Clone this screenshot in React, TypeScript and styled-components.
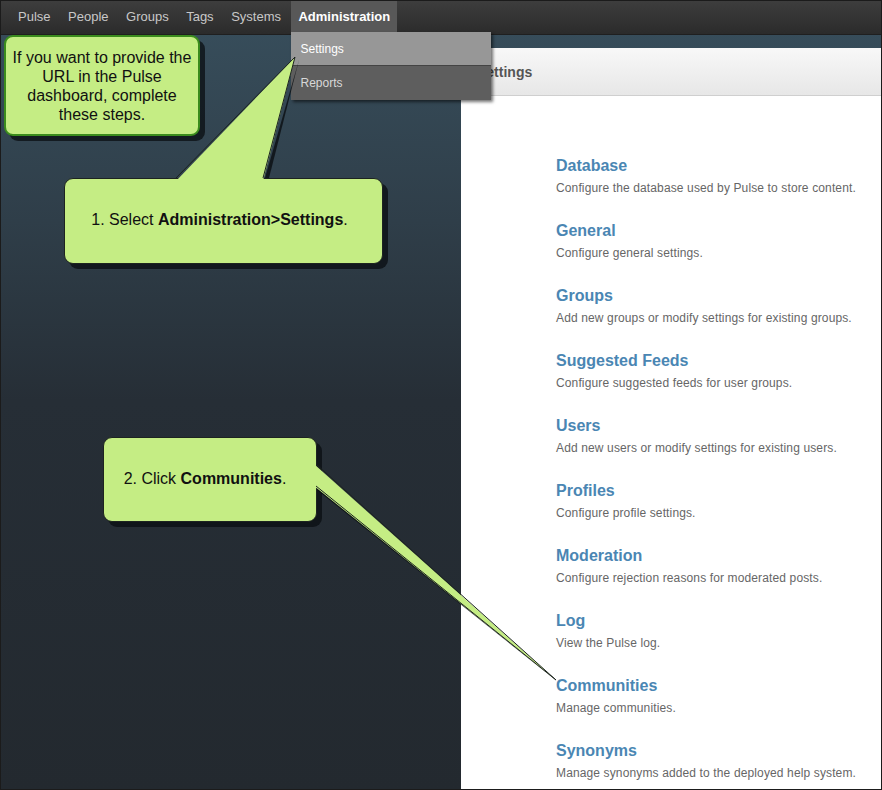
import React from "react";
import styled, { createGlobalStyle } from "styled-components";

const Global = createGlobalStyle`
  html, body { margin: 0; padding: 0; background: #fff; }
  body { font-family: "Liberation Sans", Arial, sans-serif; }
  * { box-sizing: border-box; }
`;

const Frame = styled.div`
  position: relative;
  width: 882px;
  height: 790px;
  border: 1px solid #1b1b1b;
  overflow: hidden;
  display: flex;
  flex-direction: column;
  background: linear-gradient(#384f5d 0px, #2f3e49 220px, #262e36 400px, #23292f 790px);
`;

const NavBar = styled.nav`
  height: 34px;
  flex: none;
  display: flex;
  align-items: stretch;
  padding-left: 10px;
  gap: 3.5px;
  background: linear-gradient(#3d3d3d, #2b2b2b);
  border-bottom: 1px solid #1f1f1f;
`;

const NavItem = styled.div<{ $active?: boolean }>`
  position: relative;
  display: flex;
  align-items: center;
  height: 31px;
  padding: 0 7px;
  font-size: 13px;
  color: ${(p) => (p.$active ? "#ffffff" : "#c8c8c8")};
  font-weight: ${(p) => (p.$active ? "bold" : "normal")};
  background: ${(p) => (p.$active ? "#585858" : "transparent")};
`;

const Dropdown = styled.div`
  position: absolute;
  left: 0;
  top: 31px;
  width: 200px;
  z-index: 5;
  box-shadow: 2px 2px 3px rgba(0, 0, 0, 0.55);
  display: flex;
  flex-direction: column;
`;

const DropItem = styled.div<{ $hover?: boolean }>`
  height: 34px;
  display: flex;
  align-items: center;
  padding-left: 9px;
  font-size: 12px;
  font-weight: normal;
  color: ${(p) => (p.$hover ? "#ffffff" : "#d8d8d8")};
  background: ${(p) => (p.$hover ? "#979797" : "#5e5e5e")};
  border-bottom: ${(p) => (p.$hover ? "1px solid #444" : "none")};
`;

const Body = styled.div`
  flex: 1;
  display: flex;
  padding-top: 13px;
  padding-left: 460px;
  min-height: 0;
`;

const Panel = styled.section`
  flex: 1;
  background: #fff;
  display: flex;
  flex-direction: column;
`;

const PanelHeader = styled.div`
  height: 48px;
  flex: none;
  display: flex;
  align-items: center;
  padding-left: 16px;
  background: linear-gradient(#f8f8f8, #e7e7e7);
  border-bottom: 1px solid #cfcfcf;
  font-size: 14px;
  font-weight: bold;
  color: #555;
`;

const List = styled.div`
  padding: 60px 0 0 95px;
  display: flex;
  flex-direction: column;
`;

const Entry = styled.div`
  height: 65px;
  display: flex;
  flex-direction: column;
`;

const EntryTitle = styled.div`
  font-size: 16px;
  line-height: 20px;
  font-weight: bold;
  color: #4a86b3;
`;

const EntryDesc = styled.div`
  margin-top: 4px;
  font-size: 12px;
  line-height: 16px;
  letter-spacing: 0.13px;
  color: #666;
`;

const Callout = styled.div<{ $green?: boolean }>`
  position: absolute;
  z-index: 6;
  display: flex;
  align-items: center;
  justify-content: center;
  text-align: center;
  background: #c5ed84;
  border: ${(p) => (p.$green ? "2px solid #3b8c1d" : "1px solid #1d2420")};
  border-radius: 9px;
  box-shadow: 5px 5px 0 rgba(10, 14, 18, 0.75);
  font-family: Arial, "Liberation Sans", sans-serif;
  font-size: 16px;
  line-height: 19px;
  color: #111;
  b { font-weight: bold; }
`;

const PointerLayer = styled.svg`
  position: absolute;
  left: 0;
  top: 0;
  width: 882px;
  height: 790px;
  z-index: 7;
  pointer-events: none;
`;

const entries = [
  ["Database", "Configure the database used by Pulse to store content."],
  ["General", "Configure general settings."],
  ["Groups", "Add new groups or modify settings for existing groups."],
  ["Suggested Feeds", "Configure suggested feeds for user groups."],
  ["Users", "Add new users or modify settings for existing users."],
  ["Profiles", "Configure profile settings."],
  ["Moderation", "Configure rejection reasons for moderated posts."],
  ["Log", "View the Pulse log."],
  ["Communities", "Manage communities."],
  ["Synonyms", "Manage synonyms added to the deployed help system."],
];

const navItems = ["Pulse", "People", "Groups", "Tags", "Systems"];

export default function App() {
  return (
    <>
      <Global />
      <Frame>
        <NavBar>
          {navItems.map((n) => (
            <NavItem key={n}>{n}</NavItem>
          ))}
          <NavItem $active>
            Administration
            <Dropdown>
              <DropItem $hover>Settings</DropItem>
              <DropItem>Reports</DropItem>
            </Dropdown>
          </NavItem>
        </NavBar>
        <Body>
          <Panel>
            <PanelHeader>Settings</PanelHeader>
            <List>
              {entries.map(([t, d]) => (
                <Entry key={t}>
                  <EntryTitle>{t}</EntryTitle>
                  <EntryDesc>{d}</EntryDesc>
                </Entry>
              ))}
            </List>
          </Panel>
        </Body>

        <Callout $green style={{ left: 3, top: 34, width: 196, height: 101, padding: "0 4px" }}>
          If you want to provide the URL in the Pulse dashboard, complete these steps.
        </Callout>
        <Callout style={{ left: 63, top: 177, width: 319, height: 86, paddingBottom: 3, paddingRight: 8 }}>
          <span>
            1. Select <b>Administration&gt;Settings</b>.
          </span>
        </Callout>
        <Callout style={{ left: 102, top: 436, width: 214, height: 85, paddingRight: 10, paddingBottom: 2 }}>
          <span>
            2. Click <b>Communities</b>.
          </span>
        </Callout>

        <PointerLayer viewBox="0 0 882 790">
          <polygon points="264,177 298,59 268,177" fill="rgba(10,14,18,0.8)" />
          <polygon points="175,180 294,56 262,180" fill="#c5ed84" />
          <polyline points="175,177 294,56 262,177" fill="none" stroke="#1d2420" strokeWidth="1" />
          <polygon points="316,485 557,681 316,489" fill="rgba(10,14,18,0.8)" />
          <polygon points="313,463 555,679 313,485" fill="#c5ed84" />
          <polyline points="315,463 555,679 315,485" fill="none" stroke="#1d2420" strokeWidth="1" />
        </PointerLayer>
      </Frame>
    </>
  );
}
